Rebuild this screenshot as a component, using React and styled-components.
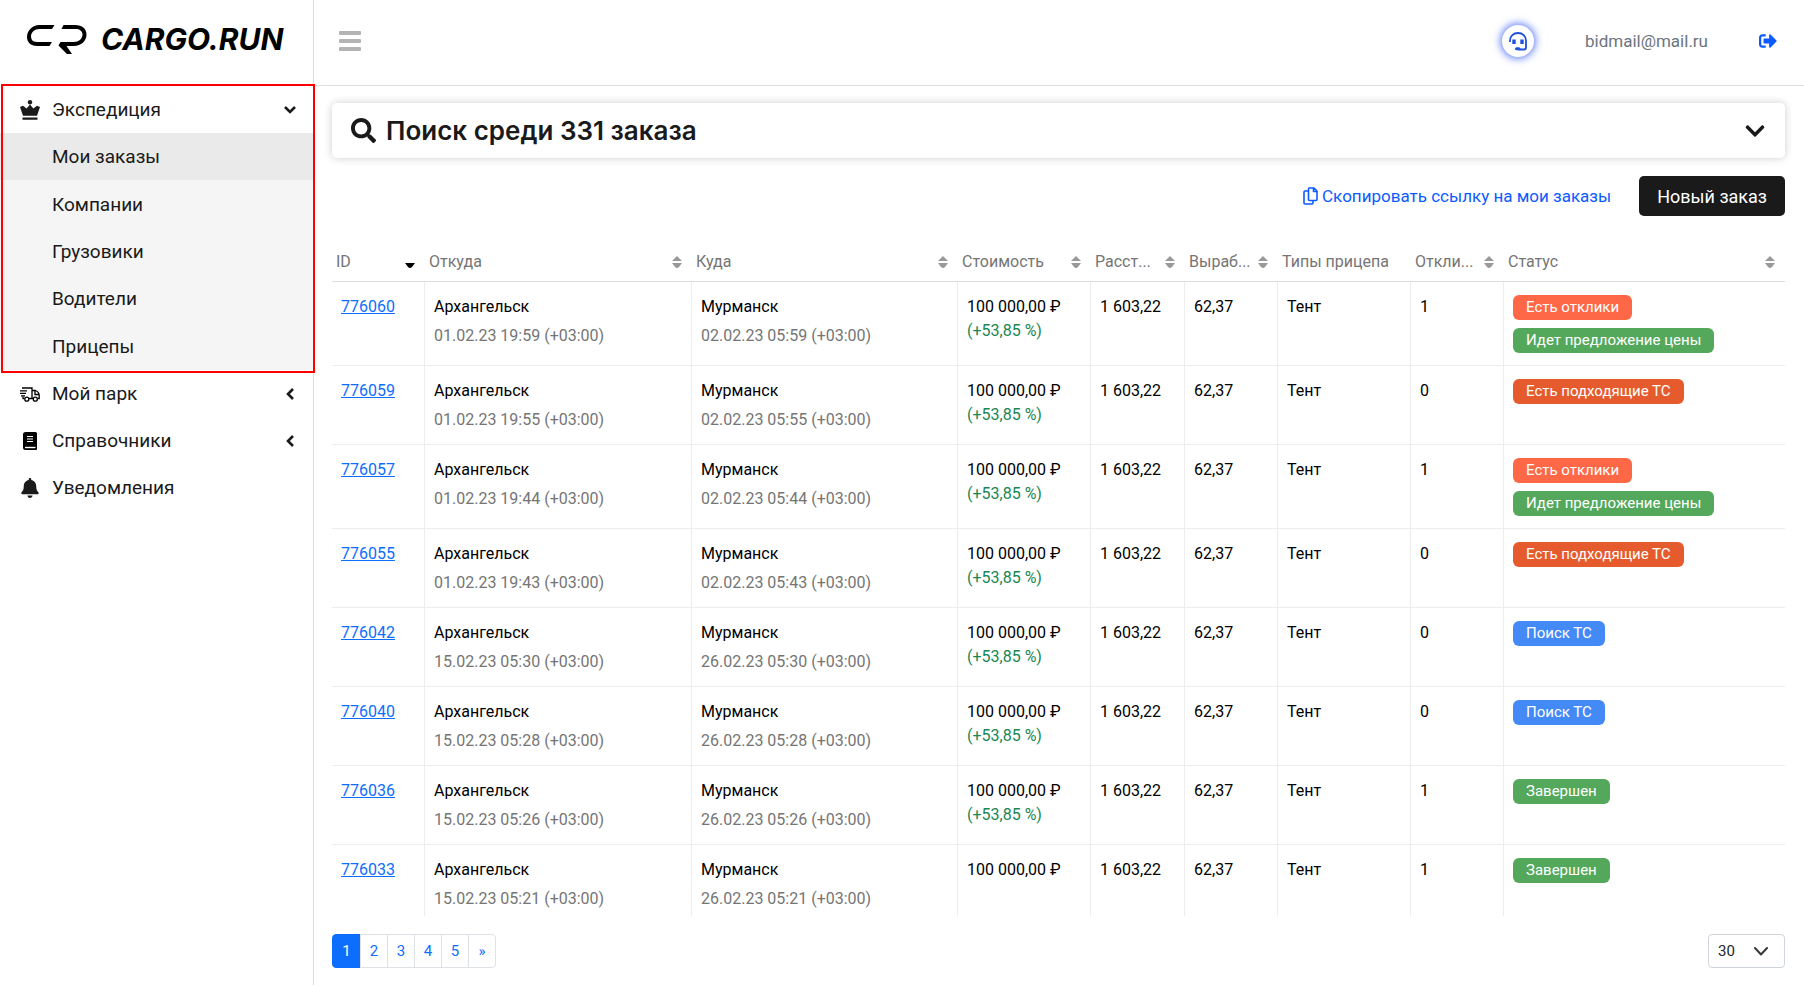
import React, { useState } from "react";
import styled, { createGlobalStyle } from "styled-components";
import { FaBell, FaChevronDown, FaSearch, FaSignOutAlt } from "react-icons/fa";

const columns = [
  { title: "ID", width: 93, sort: "desc" },
  { title: "Откуда", width: 267, sort: "both" },
  { title: "Куда", width: 266, sort: "both" },
  { title: "Стоимость", width: 133, sort: "both" },
  { title: "Расст...", width: 94, sort: "both" },
  { title: "Выраб...", width: 93, sort: "both" },
  { title: "Типы прицепа", width: 133 },
  { title: "Откли...", width: 93, sort: "both" },
  { title: "Статус", sort: "both" },
];

const statuses = {
  replies: { text: "Есть отклики", color: "#ff6847" },
  offer: { text: "Идет предложение цены", color: "#54a85b" },
  suitable: { text: "Есть подходящие ТС", color: "#e55b2d" },
  search: { text: "Поиск ТС", color: "#448af7" },
  done: { text: "Завершен", color: "#54a85b" },
};

const orders = [
  { id: 776060, from: "01.02.23 19:59", to: "02.02.23 05:59", diff: true, count: 1, status: ["replies", "offer"] },
  { id: 776059, from: "01.02.23 19:55", to: "02.02.23 05:55", diff: true, count: 0, status: ["suitable"] },
  { id: 776057, from: "01.02.23 19:44", to: "02.02.23 05:44", diff: true, count: 1, status: ["replies", "offer"] },
  { id: 776055, from: "01.02.23 19:43", to: "02.02.23 05:43", diff: true, count: 0, status: ["suitable"] },
  { id: 776042, from: "15.02.23 05:30", to: "26.02.23 05:30", diff: true, count: 0, status: ["search"] },
  { id: 776040, from: "15.02.23 05:28", to: "26.02.23 05:28", diff: true, count: 0, status: ["search"] },
  { id: 776036, from: "15.02.23 05:26", to: "26.02.23 05:26", diff: true, count: 1, status: ["done"] },
  { id: 776033, from: "15.02.23 05:21", to: "26.02.23 05:21", diff: false, count: 1, status: ["done"] },
];

const submenu = ["Мои заказы", "Компании", "Грузовики", "Водители", "Прицепы"];
const pages = ["1", "2", "3", "4", "5", "»"];

const LogoMark = () => (
  <svg width="60" height="36" viewBox="0 -4 60 36">
    <path d="M27.500 0 25 4H12C8 4 4 7 4 11.500Q4 17 10.500 17H25L22.500 21H10C3.500 21 0 17 0 12 0 5 6 0 12 0Z" />
    <path d="M36.500 0H48C55.500 0 59.500 4 59.500 9.500 59.500 16 54 21 47 21H39.500L45 29H40L31.500 20.500 33.500 17H47C51.500 17 55.500 14 55.500 9.500 55.500 6 52.500 4 48.500 4H34.500Z" />
  </svg>
);

const CrownIcon = () => (
  <svg width="20" height="20" viewBox="0 0 20 20" fill="currentColor">
    <circle cx="10" cy="2.200" r="2.200" />
    <path d="M10 4.500 13.400 8.400 17 5.800 20 7 17 15.800H3L0 7 3 5.800 6.600 8.400Z" />
    <rect x="2.500" y="17.600" width="15" height="2.200" rx=".6" />
  </svg>
);

const TruckIcon = () => (
  <svg width="20" height="18" viewBox="0 0 20 18" fill="none" stroke="#000" strokeWidth="1.300">
    <path d="M2 3H12V13.500H9M12 5.500H15.500Q19.200 7 19.200 10.500V13.500H17.500M13 13.500H12M4.500 13.500H3V11.500M15 5.500V9.500H19" />
    <path d="M0 5.800H7M0 8.300H6M1 10.800H5" />
    <circle cx="6.800" cy="14.200" r="2" />
    <circle cx="15.300" cy="14.200" r="2" />
  </svg>
);

const BookIcon = () => (
  <svg width="14" height="18" viewBox="0 0 14 18">
    <path d="M2.500 0H12.500Q14 0 14 1.500V17Q14 18 13 18H2.500Q0 18 0 15.500V2.500Q0 0 2.500 0Z" fill="#000" />
    <path d="M4 4.500H10M4 7H10M4 9.500H10" stroke="#fff" strokeWidth="1" />
    <path d="M2 15.500H12.500" stroke="#fff" strokeWidth="1.400" />
  </svg>
);

const ChevronIcon = ({ open }) => (
  <svg width="12" height="12" viewBox="0 0 12 12" fill="none" stroke="#1a1a1a" strokeWidth="2.600">
    <path d={open ? "M1 3 6 8 11 3" : "M9 1 4 6 9 11"} />
  </svg>
);

const CopyIcon = () => (
  <svg width="15" height="18" viewBox="0 0 15 18" fill="none" stroke="currentColor" strokeWidth="1.600" strokeLinejoin="round">
    <path d="M5.500 1H11L14 4V12.500Q14 13.500 13 13.500H6.500Q5.500 13.500 5.500 12.500V2Q5.500 1 6.500 1M10.500 1V4.500H14" />
    <path d="M5.500 4H2Q1 4 1 5V16Q1 17 2 17H9Q10 17 10 16V13.500" />
  </svg>
);

const HeadsetIcon = () => (
  <svg width="18" height="19" viewBox="0 0 18 19" fill="none" stroke="#1f4fe0" strokeWidth="1.800">
    <path d="M1 10V8.500C1 4 4.500 1 9 1S17 4 17 8.500V15.500Q17 17.500 15 17.500H9.500" />
    <path d="M5 7.500V12M13 7.500V12" strokeWidth="3.400" />
    <path d="M7.500 16.800H10" strokeWidth="3" strokeLinecap="round" />
  </svg>
);

const MenuIcon = () => (
  <svg width="22" height="20" viewBox="0 0 22 20" fill="#b3b3b3">
    <rect width="22" height="4" rx="1" />
    <rect y="8" width="22" height="4" rx="1" />
    <rect y="16" width="22" height="4" rx="1" />
  </svg>
);

const SortIcon = ({ type }) => (
  <svg width="10" height="12" viewBox="0 0 10 12" fill={type === "desc" ? "#000" : "#999"}>
    {type === "both" && <path d="M5 0 10 5H0Z" />}
    <path d="M0 7H10L7 11Q5 13 3 11Z" />
  </svg>
);

const SelectArrow = () => (
  <svg width="14" height="9" viewBox="0 0 14 9" fill="none" stroke="#343a40" strokeWidth="2" strokeLinecap="round" strokeLinejoin="round">
    <path d="M1 1 7 7.500 13 1" />
  </svg>
);

const App = () => {
  const [page, setPage] = useState("1");
  const [pageSize, setPageSize] = useState("30");

  return (
    <Layout>
      <GlobalStyle />
      <Sidebar>
        <Logo href="#">
          <LogoMark />
          CARGO.RUN
        </Logo>
        <nav>
          <MenuGroup>
            <MenuLink href="#">
              <MenuIconBox><CrownIcon /></MenuIconBox>
              <MenuText>Экспедиция</MenuText>
              <ChevronIcon open />
            </MenuLink>
            <Submenu>
              {submenu.map((name, index) => (
                <SubmenuLink href="#" key={name} $active={index === 0}>
                  {name}
                </SubmenuLink>
              ))}
            </Submenu>
          </MenuGroup>
          <MenuLink href="#">
            <MenuIconBox><TruckIcon /></MenuIconBox>
            <MenuText>Мой парк</MenuText>
            <ChevronIcon />
          </MenuLink>
          <MenuLink href="#">
            <MenuIconBox><BookIcon /></MenuIconBox>
            <MenuText>Справочники</MenuText>
            <ChevronIcon />
          </MenuLink>
          <MenuLink href="#">
            <MenuIconBox><FaBell size={20} /></MenuIconBox>
            <MenuText>Уведомления</MenuText>
          </MenuLink>
        </nav>
      </Sidebar>

      <Main>
        <Header>
          <IconButton aria-label="Меню"><MenuIcon /></IconButton>
          <UserBar>
            <SupportButton aria-label="Поддержка"><HeadsetIcon /></SupportButton>
            <Email>bidmail@mail.ru</Email>
            <LogoutLink href="#" aria-label="Выход"><FaSignOutAlt size={18} /></LogoutLink>
          </UserBar>
        </Header>

        <Content>
          <SearchPanel>
            <FaSearch size={25} />
            <SearchTitle>Поиск среди 331 заказа</SearchTitle>
            <FaChevronDown size={22} />
          </SearchPanel>

          <Actions>
            <CopyLink href="#">
              <CopyIcon />
              Скопировать ссылку на мои заказы
            </CopyLink>
            <NewOrder>Новый заказ</NewOrder>
          </Actions>

          <TableWrap>
            <Table>
              <colgroup>
                {columns.map((col) => (
                  <col key={col.title} width={col.width} />
                ))}
              </colgroup>
              <thead>
                <tr>
                  {columns.map((col) => (
                    <Th key={col.title}>
                      <ThInner>
                        {col.title}
                        {col.sort && <SortIcon type={col.sort} />}
                      </ThInner>
                    </Th>
                  ))}
                </tr>
              </thead>
              <tbody>
                {orders.map((order) => (
                  <tr key={order.id}>
                    <Td><OrderLink href="#">{order.id}</OrderLink></Td>
                    <Td>
                      Архангельск
                      <DateText>{order.from} (+03:00)</DateText>
                    </Td>
                    <Td>
                      Мурманск
                      <DateText>{order.to} (+03:00)</DateText>
                    </Td>
                    <Td>
                      100 000,00 ₽
                      {order.diff && <Diff>(+53,85 %)</Diff>}
                    </Td>
                    <Td>1 603,22</Td>
                    <Td>62,37</Td>
                    <Td>Тент</Td>
                    <Td>{order.count}</Td>
                    <Td>
                      <Badges>
                        {order.status.map((key) => (
                          <Badge key={key} $color={statuses[key].color}>
                            {statuses[key].text}
                          </Badge>
                        ))}
                      </Badges>
                    </Td>
                  </tr>
                ))}
              </tbody>
            </Table>
          </TableWrap>

          <Footer>
            <Pagination>
              {pages.map((name) => (
                <PageButton key={name} $active={name === page} onClick={() => setPage(name)}>
                  {name}
                </PageButton>
              ))}
            </Pagination>
            <SelectBox>
              <PageSelect
                aria-label="Строк на странице"
                value={pageSize}
                onChange={(e) => {
                  setPageSize(e.target.value);
                }}
              >
                <option>30</option>
                <option>50</option>
                <option>100</option>
              </PageSelect>
              <SelectArrow />
            </SelectBox>
          </Footer>
        </Content>
      </Main>
    </Layout>
  );
};

export default App;

const GlobalStyle = createGlobalStyle`
  * {
    box-sizing: border-box;
  }

  body {
    margin: 0;
    background: #fff;
    color: #1a1a1a;
    font-family: Roboto, "Liberation Sans", sans-serif;
    font-size: 16px;
  }

  a {
    text-decoration: none;
  }

  button, select {
    font-family: inherit;
    cursor: pointer;
  }

  svg {
    flex-shrink: 0;
  }
`;

const Layout = styled.div`
  display: flex;
  height: 100vh;
`;

const Sidebar = styled.aside`
  flex: 0 0 314px;
  border-right: 1px solid #dedede;
`;

const Logo = styled.a`
  display: flex;
  align-items: center;
  gap: 14px;
  height: 86px;
  padding: 0 0 8px 27px;
  color: #000;
  font-family: Inter, sans-serif;
  font-size: 30px;
  font-style: italic;
  font-weight: 700;
`;

const MenuGroup = styled.div`
  position: relative;

  &::after {
    content: "";
    position: absolute;
    inset: -2px -2px -3px 1px;
    border: 2px solid #f00;
    pointer-events: none;
  }
`;

const MenuLink = styled.a`
  display: flex;
  align-items: center;
  height: 47px;
  padding: 0 17px 0 20px;
  color: #1a1a1a;
`;

const MenuIconBox = styled.span`
  display: flex;
  justify-content: center;
  width: 20px;
  margin-right: 12px;
`;

const MenuText = styled.span`
  flex: 1;
  font-size: 19px;
`;

const Submenu = styled.div`
  display: grid;
  grid-auto-rows: 1fr;
  height: 237px;
  background: #f5f5f5;
`;

const SubmenuLink = styled.a`
  display: flex;
  align-items: center;
  padding-left: 52px;
  background: ${(props) => (props.$active ? "#eaeaea" : "transparent")};
  color: #1a1a1a;
  font-size: 19px;
`;

const Main = styled.main`
  display: flex;
  flex: 1;
  flex-direction: column;
  min-width: 0;
`;

const Header = styled.header`
  display: flex;
  align-items: center;
  justify-content: space-between;
  height: 86px;
  padding: 0 27px 3px 25px;
  border-bottom: 1px solid #dedede;
`;

const IconButton = styled.button`
  display: flex;
  padding: 0;
  border: none;
  background: none;
`;

const UserBar = styled.div`
  display: flex;
  align-items: center;
`;

const SupportButton = styled(IconButton)`
  align-items: center;
  justify-content: center;
  width: 32px;
  height: 32px;
  border-radius: 50%;
  background: #fff;
  box-shadow: 0 0 8px 1px #4a6cf7;
`;

const Email = styled.span`
  margin: 0 51px;
  color: #6c757d;
  font-size: 17px;
`;

const LogoutLink = styled.a`
  display: flex;
  color: #0d5bff;
`;

const Content = styled.div`
  display: flex;
  flex: 1;
  flex-direction: column;
  min-height: 0;
  padding: 17px 19px 17px 18px;
`;

const SearchPanel = styled.section`
  display: flex;
  flex-shrink: 0;
  align-items: center;
  gap: 10px;
  height: 55px;
  padding: 0 19px;
  border-radius: 5px;
  box-shadow: 0 0 8px rgba(0, 0, 0, 0.2);
`;

const SearchTitle = styled.h1`
  flex: 1;
  margin: 0;
  font-family: Inter, sans-serif;
  font-size: 26px;
  font-weight: 600;
`;

const Actions = styled.div`
  display: flex;
  align-items: center;
  justify-content: flex-end;
  gap: 28px;
  margin: 18px 0 27px;
`;

const CopyLink = styled.a`
  display: flex;
  align-items: center;
  gap: 4px;
  color: #0d5bff;
  font-size: 17px;
`;

const NewOrder = styled.button`
  height: 40px;
  padding: 0 18px;
  border: none;
  border-radius: 5px;
  background: #1a1a1a;
  color: #fff;
  font-size: 18px;
`;

const TableWrap = styled.div`
  flex: 1;
  min-height: 0;
  overflow: hidden;
`;

const Table = styled.table`
  width: 100%;
  table-layout: fixed;
  border-collapse: separate;
  border-spacing: 0;
`;

const Th = styled.th`
  height: 39px;
  padding: 0 10px 1px 4px;
  border-bottom: 1px solid #dcdcdc;
  color: #757575;
  font-weight: 400;
  text-align: left;
`;

const ThInner = styled.div`
  display: flex;
  align-items: center;
  justify-content: space-between;
  white-space: nowrap;
`;

const Td = styled.td`
  height: 79px;
  padding: 13px 9px 12px;
  border-right: 1px solid #ededed;
  border-bottom: 1px solid #ededed;
  color: #000;
  line-height: 24px;
  vertical-align: top;
  white-space: nowrap;

  &:last-child {
    border-right: none;
  }
`;

const OrderLink = styled.a`
  color: #0d6efd;
  text-decoration: underline;
`;

const DateText = styled.div`
  margin-top: 5px;
  color: #757575;
`;

const Diff = styled.div`
  color: #198754;
`;

const Badges = styled.div`
  display: flex;
  flex-direction: column;
  align-items: flex-start;
  gap: 8px;
`;

const Badge = styled.span`
  padding: 0 13px;
  border-radius: 6px;
  background: ${(props) => props.$color};
  color: #fff;
  font-size: 15px;
  line-height: 25px;
`;

const Footer = styled.footer`
  display: flex;
  justify-content: space-between;
  margin-top: 18px;
`;

const Pagination = styled.div`
  display: flex;
`;

const PageButton = styled.button`
  width: 28px;
  height: 34px;
  margin-left: -1px;
  padding: 0;
  border: 1px solid ${(props) => (props.$active ? "#0d6efd" : "#dee2e6")};
  background: ${(props) => (props.$active ? "#0d6efd" : "#fff")};
  color: ${(props) => (props.$active ? "#fff" : "#0d6efd")};
  font-size: 15px;

  &:first-child {
    width: 29px;
    margin-left: 0;
    border-radius: 4px 0 0 4px;
  }

  &:last-child {
    border-radius: 0 4px 4px 0;
  }
`;

const SelectBox = styled.div`
  position: relative;

  svg {
    position: absolute;
    top: 13px;
    right: 17px;
    pointer-events: none;
  }
`;

const PageSelect = styled.select`
  width: 77px;
  height: 34px;
  padding: 0 9px;
  appearance: none;
  border: 1px solid #ced4da;
  border-radius: 4px;
  background: #fff;
  color: #212529;
  font-size: 15px;
`;
